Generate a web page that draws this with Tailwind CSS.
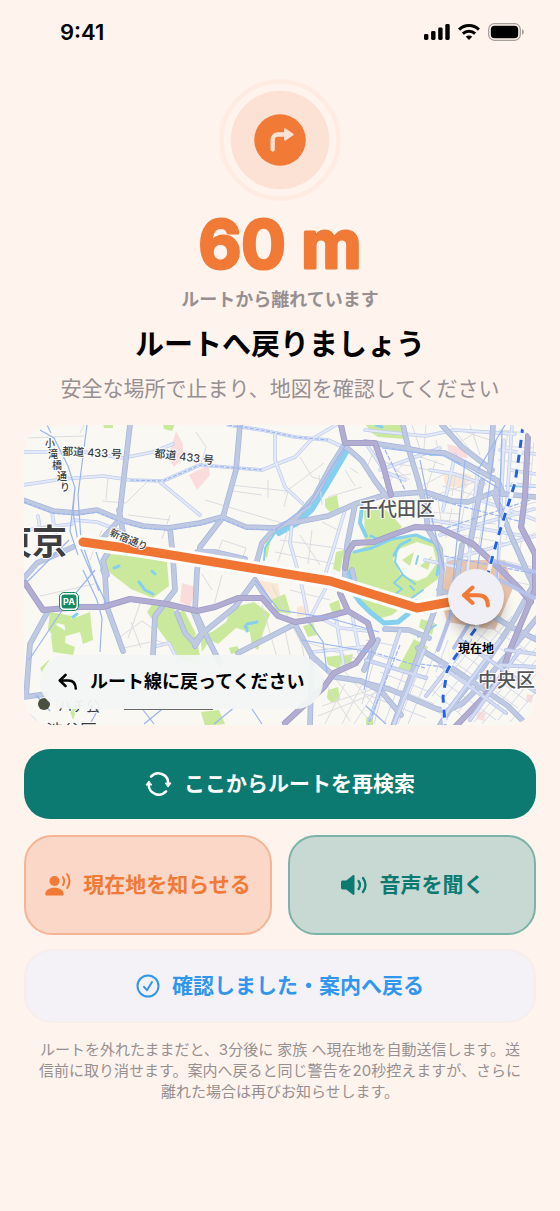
<!DOCTYPE html>
<html lang="ja">
<head>
  <meta charset="UTF-8" />
  <meta name="viewport" content="width=device-width, initial-scale=1.0" />
  <title>ルートへ戻りましょう</title>
  <script src="https://cdn.jsdelivr.net/npm/@tailwindcss/browser@4"></script>
</head>
<body class="min-h-screen bg-[#fff3ed] font-['Inter','Noto_Sans_CJK_JP',sans-serif] text-black">

  <!-- Status bar -->
  <header class="flex h-16 items-center justify-between pl-15 pr-9">
    <span class="text-[22px] font-semibold leading-none">9:41</span>
    <div class="flex items-center gap-2">
      <svg class="h-4 w-[26px]" viewBox="0 0 26 16" aria-hidden="true">
        <rect x="0" y="10" width="4.4" height="6" rx="1.4" />
        <rect x="7.1" y="7" width="4.4" height="9" rx="1.4" />
        <rect x="14.2" y="3.5" width="4.4" height="12.5" rx="1.4" />
        <rect x="21.3" y="0" width="4.4" height="16" rx="1.4" />
      </svg>
      <svg class="h-4 w-[22px]" viewBox="0 0 22 16" aria-hidden="true">
        <g fill="none" stroke="#000" stroke-width="3">
          <path d="M1.1 5.6a14.2 14.2 0 0 1 19.8 0" />
          <path d="M4.9 9.6a8.8 8.8 0 0 1 12.2 0" />
        </g>
        <path d="M11 16l-3.2-3.3a4.6 4.6 0 0 1 6.4 0z" />
      </svg>
      <svg class="h-[18px] w-9" viewBox="0 0 36 18" aria-hidden="true">
        <rect x="0.7" y="0.7" width="31.6" height="16.6" rx="5.6" fill="none" stroke="#a59f9c" stroke-width="1.3" />
        <rect x="2.8" y="2.8" width="27.4" height="12.4" rx="3.8" />
        <path d="M34 6v6c1.1-.5 1.8-1.6 1.8-3S35.100 6.500 34 6z" fill="#a59f9c" />
      </svg>
    </div>
  </header>

  <main class="flex flex-col px-6 pt-[15px]">

    <!-- Off-route alert -->
    <section class="flex flex-col items-center text-center">
      <svg class="size-[122px]" viewBox="0 0 122 122" aria-hidden="true">
        <circle cx="61" cy="61" r="58.500" fill="none" stroke="#feebe2" stroke-width="4.500" />
        <circle cx="61" cy="61" r="49.300" fill="#fce1d5" />
        <circle cx="61" cy="61" r="25.800" fill="#f07a36" />
        <path d="M53.700 70.500V60.500a5 5 0 0 1 5-5H66" fill="none" stroke="#fce1d5" stroke-width="4.300" stroke-linecap="round" />
        <path d="M66 50.200v10.600l7.800-5.300z" fill="#fce1d5" stroke="#fce1d5" stroke-width="1.800" stroke-linejoin="round" />
      </svg>
      <svg class="mt-2 h-[70px] w-[200px]" viewBox="0 0 200 70" role="img" aria-label="60 m">
        <text x="100" y="59" text-anchor="middle" font-family="Inter, sans-serif" font-size="66" font-weight="700" fill="#f07a36" stroke="#f07a36" stroke-width="3" stroke-linejoin="round">60 m</text>
      </svg>
      <p class="mt-2 text-lg font-semibold leading-[26px] text-[#969092]">ルートから離れています</p>
      <h1 class="mt-3 text-[29px] font-bold leading-10">ルートへ戻りましょう</h1>
      <p class="mt-2 text-[21px] leading-8 text-[#969092]">安全な場所で止まり、地図を確認してください</p>
    </section>

    <!-- Map -->
    <section class="relative mt-5 overflow-hidden rounded-[28px]" aria-label="地図">
      <svg class="block w-full" viewBox="24 425 512 300" fill="none" font-family="Inter, 'Noto Sans CJK JP', sans-serif">
        <defs>
          <!-- Arterial roads -->
          <g id="arterials">
            <path d="M130 425l-7 60-4 35-16 18M119 510l4 22" />
            <path d="M23 500l30 11 24 2 20-3 24 10 22 6 25 2 32-5 22-6 24 10 30 1 18-8 21-24 16-30 14-22" />
            <path d="M240 425l-4 45-13 47-23 30-3 24-2 40 9 20-9 15M204 631l16 32" />
            <path d="M345 446l17 15 13 20 12 16M275 528l-13 15-7 25" />
            <path d="M292 523l36-7 27-12 20-6 10-3 40-3 27 9 16 1 24-9 44 4" />
            <path d="M355 505l-8 40-3 40" />
            <path d="M365 442l40 6 20 4 20 1 20 10 33 18 4 10" />
            <path d="M403 425l5 22 10 33 7 27 3 22" />
            <path d="M442 425l20 22 30 23M493 425l-3 46M498 482l-3 14 17 42 18 40 7 14" />
            <path d="M103 570l2 5 2 32 16 44M170 528l3 30 2 32-20 26-2 38M107 575l-4-14 8-14M47 613l-17 31-4 53M24 697l22-3" />
            <path d="M24 578l13-15 36-16" />
            <path d="M255 580l-20 27-32 26M255 580l14 22M238 653l57-29 17 32 23 21 26 4 20 10 20 24M312 657l-2 68" />
            <path d="M197 552h18l30 7M177 613l8 20 9 10 8-10-8-20" />
            <path d="M385 629l24 1 20 8M352 570l4 18" />
            <path d="M428 529l12 20 2 22-3 27-18 50-19 53-10 28M439 590l44 20 30 18 24 12" />
            <path d="M365 683l24 6 48 20 10 2 16-8 22-22 22-26 30-37" />
            <path d="M536 580l-22 40-30 46-32 40-12 19M418 648l40 24 50 34 18 18" />
            <path d="M462 545l-6 40" />
            <path d="M378 640l-14 30M470 545l12-64" />
          </g>
          <!-- Expressways -->
          <g id="expressways">
            <path d="M25 583l18 27 37-3 23 0 27-8 37 5 30 7 18-4 23-9 24 0 16 18 17 6 27-4 26-7" />
            <path d="M341 425l4 18h30l8 22 8 30M340 593l8 18 20 12 5 17-17 23-22 10-10 14-39 36" />
            <path d="M345 568l3-16 6-9 20-1 18-7 23-8 24 1 34 16 26 24 20 20 12 14" />
            <path d="M528 436l-3 61-4 30 14 27v36l-26 62-8 26-20 22-26 27" />
          </g>
          <!-- Secondary streets -->
          <g id="streets">
            <path d="M24 452l60 0 39 6 30-6 20-8M23 485l40-6 40-3 27 4 33 1 37-16 62 5 33-13 17-18 24-14" />
            <path d="M228 425l34 5 33 7 33 3 15 7M275 433v27l10 27 17 16M160 482l40 33" />
            <path d="M345 510l-12 40-8 25M292 523l-2 20 8 28M73 520l24 2 26 10" />
            <path d="M24 530l48-6M38 516l4 26M52 512l4 26M330 580l-20 38M300 577l9 45" />
            <path d="M153 647l16-4 10 20M336 618l8 50M352 614l8 42M312 652l60-6M320 618l20 10 28 3" />
            <path d="M380 470l60-22M365 442l20 30 20 8M455 455l-12 55M478 468l-14 140M504 440l-8 170M512 425l-6 90" />
            <path d="M430 470l24 4 30 10M425 560l36 8M430 520l94 16M440 535l94-26M448 560l88-24M480 500l56 20" />
            <path d="M365 430l60 6 30-6 60 4M500 450l36 4M510 470l26 4M512 484l24 2" />
          </g>
        </defs>

        <rect x="24" y="425" width="512" height="300" fill="#f9f8f3" />

        <!-- Districts -->
        <g fill="#fbdcdc">
          <path d="M176 431l7 13v14l-9 9-6-10zM189 475l19-10 2 10-13 15z" />
          <path d="M447 444l18 5 3 9-18-1zM182 583l14 4-6 20-10-5zM478 711l8 2-2 8-8-2zM527 694l6 1-1 8-6-2z" />
        </g>
        <path d="M443 470l28 5-4 13-22-2zM258 580l20 4 3 16-12 2zM297 607l9-2 2 10-11 2z" fill="#fae8d4" />
        <path d="M447 560h58l8 28-18 42-48-8-6-24z" fill="#e9c5ad" />

        <!-- Parks -->
        <g fill="#cbe99c">
          <path d="M103 424h10v4h-9zM163 424h12l-3 7-8-2zM365 424h38l3 15-28-2-6-4z" />
          <path d="M108 554l20 1 39 7 2 24-16 12-22-9-22-17-8-10z" />
          <path d="M325 499l12-4 2 13-9 4-5-5zM336 552l8-2-4 22-7-3z" />
          <path d="M364 511l14-6 12 8 12 14-10 8-27 5zM348 554l20-9 26-6 24-4 16 6 5 14-1 24-22 16-24 20-14 4-18-20-9-8-4-26z" />
          <path d="M50 612l22 4-3 10-12-3-5 12-4-6zM56 625l10 6-1 12 10 4-2 8-20-3-2-16zM64 622l26-10 3 28-10 4-3-12-14 4z" />
          <path d="M147 612l8-12 18 6 4 12 20 20 4 26-20-4-22-30zM176 614l8-4 12 24-8 8z" />
          <path d="M212 632l14-10 6-14 22-6 16 12-6 16-6 20-6-4-2-14-14-4-18 16-8-4-8 12-2-18zM229 648l8-2 4 6-10 2z" />
          <path d="M271 600l14-6 6 20-14-2zM303 626l10-3 4 12-9 2zM329 604l10-4 2 10-9 2zM326 657l16-2-2 14-12-4zM343 656l10-2-2 8-7 3zM328 690l10-3 2 12-8 4-5-5z" />
          <path d="M414 639l14 8-12 27-19-4zM421 619l14 4-3 12-13-8zM40 668l10-9-8 14zM68 706l10-1-5 15zM201 712l18-2 6 14-20 2zM366 718l7-4v11h-7zM266 540l5-2-4 20-3-3z" />
        </g>
        <path d="M399 549l18-7 16 5 4 16-10 14-10 4-16-6-8-16z" fill="#f9f8f3" />
        <path d="M402 560l12-8-4 14zM420 566l12-10-4 14zM378 575l16 6-12 8z" fill="#cbe99c" />

        <!-- Water -->
        <g stroke="#84d0ee" stroke-linecap="round" stroke-linejoin="round">
          <path d="M346 452l-17 29-17 28-15 14-18 10" stroke-width="6" />
          <path d="M277 530l-12 18-1 12" stroke-width="2" />
          <path d="M362 507l-2 16 6 13" stroke-width="4" />
          <path d="M354 552l18-4 20-9 24-4 19 8 5 14-3 18M394 555l6-10 10-5" stroke-width="3" />
          <path d="M350 572v16l10 14 10 10 14 11 14-1 10-8 8-12" stroke-width="5" />
          <path d="M397 548l-2 14 8 13 12 9M418 556l-2 8M401 606l8-6 14-10M402 575l-8 8 8 6-8 6M410 586l4 4" stroke-width="2" />
          <path d="M114 568l5-2M139 582l6 8 8 4M152 571l3 3M245 627l2-3 10-2M247 631v-3M73 617l4-3M371 536l8 4M376 425l6 2" stroke-width="3" />
          <path d="M430 455l15-1 15 10M506 486l30 1M418 637l18-12" stroke-width="2" />
        </g>

        <!-- Lanes -->
        <g stroke="#dcdce0" stroke-width="1">
          <path d="M24 438l60-2M84 425l-4 8M108 476l-2 24M102 501l24 2 20-20M90 560l12-30M128 515l42 5M170 515l-8 24M196 432l10 15-6 20" />
          <path d="M230 485l58 6-4 16M232 491l30 4M268 480v18M284 493l40-30M300 457l12 20 14 4M322 505l-3-30M205 500l80 24M200 520l-5 4" />
          <path d="M222 540l24 8-6 18M222 541l-5 14M280 540l70 10M275 552l60 12M288 530l-10 32M312 530l-4 34M322 522l16 8M300 535l20 30M345 470l10 16M350 468l8 5M328 497l34-10" />
          <path d="M120 637l22-16 14 10M124 648l26-6M131 622l10 26M142 598l-14 40M40 596l54-12M155 640l18 6M212 590l-10-16M222 575l-8 30" />
          <path d="M262 605l20 70M272 585l30 60 8 46M290 590l40 10M300 640l60 20M285 630l6 30M320 675l30 46M330 672l40 50M345 672l30 34M322 706l60-20M318 716l60-24M345 684l-20 40M362 684l-20 40M376 690l-22 34" />
          <path d="M366 470l12-30M370 450l40 30M378 462l34 4M381 478l30-4M404 462l-22 30M414 455l30 10M418 468l22 4M422 486l26-14M436 460l-10 30M456 472l-4 24M466 474l-4 26M436 495l60-20M442 486l50 14M484 475l-18 24" />
          <path d="M366 512l60-14M430 500l2 24M438 500l4 28M430 512l30 2M452 508l-6 30M464 508l-6 34M474 506l-6 34M486 504l-8 46M440 520l56 4M446 532l64 12M500 512l36-10M498 546l40-14M512 510l-6 30M526 512l-8 50M500 560l36 8M506 580l30 6" />
          <path d="M412 425l8 24M426 425l-2 24M436 440l2 10M450 425l24 30M470 425l10 30M480 430l-20 12M499 430l36 4M500 446l34 2M498 460l34 4M508 430l-6 50M534 440l-4 50M460 430l30 10" />
        </g>

        <!-- City blocks south-east of the palace -->
        <g stroke="#d3d8ea" stroke-width="1">
          <path d="M366 640l30 6M366 652l26 8M366 694l60 24M380 672l50 20M374 660l-12 44M390 664l-16 60M404 672l-20 52M416 678l-18 46M428 676l-20 48M400 690l34 14M440 640l-14 36M448 640l-12 32" />
          <path d="M436 676l60 44M444 668l64 46M452 660l66 48M460 652l68 50M468 644l66 46M478 634l58 38M488 626l48 30M432 690l30 26M428 704l20 16" />
          <path d="M442 700l70-84M450 706l74-90M458 712l72-88M466 718l70-84M474 722l62-74M482 724l54-64M432 696l66-80M498 720l38-46M510 722l26-30" />
        </g>

        <!-- Road surfaces -->
        <g stroke-linejoin="round" stroke-linecap="round">
          <use href="#streets" stroke="#c0ccef" stroke-width="3.600" />
          <use href="#streets" stroke="#e4e9f7" stroke-width="2.200" />
          <use href="#arterials" stroke="#a5b4de" stroke-width="5.600" />
          <use href="#arterials" stroke="#bfc9e1" stroke-width="4.200" />
          <use href="#expressways" stroke="#9f9ac9" stroke-width="6" />
          <use href="#expressways" stroke="#b2aed2" stroke-width="4.400" />
          <g stroke="#b7c3ea" stroke-width="4">
            <path d="M400 630l-30 90M424 650l-30 74M366 660l60 18M470 640l-44 56M500 640l-56 76M520 650l-50 70M440 665l66 48M460 640l76 52M506 650l30 4M500 665l36 2" />
            <path d="M456 600l-18 50M500 580l34 18M490 560l46 12M470 622l-16 26" />
          </g>
          <g stroke="#d3dbf1" stroke-width="2.400">
            <path d="M400 630l-30 90M424 650l-30 74M366 660l60 18M470 640l-44 56M500 640l-56 76M520 650l-50 70M440 665l66 48M460 640l76 52M506 650l30 4M500 665l36 2" />
          </g>
        </g>

        <!-- Rail and subway -->
        <g stroke="#9bb5f1" stroke-width="1.200">
          <path d="M40 430l14 8 14 28 7 22-2 24 5 30 14 33M47 425l4 8M75 487l-5 44 8 24M87 425l-9 70 3 45 12 35 6 16" />
          <path d="M83 570l14 30 5 18-2 34M93 575l14 30M96 552l6 18M69 540l-20 20-22 22M95 570l-30 36-36 54" />
          <path d="M228 425l34 5 33 7 33 3M130 480l33 1 37-16 62 5" stroke-dasharray="4 1.500" />
          <path d="M24 502l29 11 24 2 20-3 24 10 22 6 25 2 32-5 22-6 24 10 30 1" stroke-dasharray="3 2" />
          <path d="M345 446l-36 58-34 26M255 580l24 30 50 8 50 14M302 640l68 12M309 622l14 20 4 30" />
          <path d="M382 448l62 8 22 12 32 20M420 460l10 50 14 60M465 460l-16 160M470 620l26-180M502 430l-6 180M478 470l36-60" />
          <path d="M385 450l20 40M426 497l100 26M440 530l90-30M444 556l92 18M365 650l60 18M400 645l-32 80M420 664l30 4" stroke-dasharray="5 1.500" />
          <path d="M24 710l16 14M36 695l14 16M100 706l-10 18M166 706l-22 18M140 706l14 18M250 706l12 18M236 706l-22 18M366 706l20 18M372 650l-8 40" />
        </g>
        <path d="M523 425l-3 24-5 34-17 54-11 40-10 50-22 30-8 14-4 26 2 28" stroke="#f3f6ff" stroke-width="4" />
        <path d="M523 425l-3 24-5 34-17 54-11 40-10 50-22 30-8 14-4 26 2 28" stroke="#2563dc" stroke-width="3" stroke-dasharray="8 7" />

        <!-- Suggested route -->
        <g stroke-linecap="round" stroke-linejoin="round">
          <path d="M83 542l70 10 177 29 87 27 60-11" stroke="#fffdfb" stroke-width="15" />
          <path d="M83 542l70 10 177 29 87 27 60-11" stroke="#f07432" stroke-width="9" />
        </g>

        <!-- Parking area sign -->
        <rect x="59.500" y="592.500" width="19" height="18" rx="4.500" fill="#fff" stroke="#178a63" />
        <rect x="61.500" y="594.500" width="15" height="14" rx="3" fill="#178a63" />
        <text x="69" y="605" text-anchor="middle" font-size="9" font-weight="700" fill="#fff">PA</text>

        <!-- Labels -->
        <g fill="#3d3d40" stroke="#fff" stroke-width="2" stroke-linejoin="round" paint-order="stroke">
          <text x="-3" y="555" font-size="35" font-weight="600">東京</text>
          <text x="359" y="516" font-size="19" font-weight="500" fill="#55565a">千代田区</text>
          <text x="478" y="687" font-size="19" font-weight="500" fill="#55565a">中央区</text>
          <g font-size="11" font-weight="500">
            <text x="62" y="455" transform="rotate(3 62 455)">都道 433 号</text>
            <text x="154" y="457" transform="rotate(7 154 457)">都道 433 号</text>
            <text x="109" y="535" transform="rotate(23 109 535)" font-size="10">新宿通り</text>
            <text x="45" y="447" font-size="10">小</text>
            <text x="48" y="458" font-size="10">滝</text>
            <text x="52" y="469" font-size="10">橋</text>
            <text x="57" y="480" font-size="10">通</text>
            <text x="60" y="491" font-size="10">り</text>
          </g>
          <text x="46" y="737" font-size="17">渋谷区</text>
          <text x="58" y="711" font-size="14">ハチ公</text>
        </g>
        <circle cx="44" cy="704" r="6" fill="#4a5140" />
        <path d="M124 709.500h89" stroke="#6b6b6b" />
      </svg>

      <!-- Guidance hint -->
      <div class="absolute bottom-4 left-4 flex h-[54px] items-center gap-3 rounded-full bg-[#f2f5f4]/95 px-[18px] text-lg font-semibold">
        <svg class="h-[18px] w-5" viewBox="0 0 20 18" fill="none" stroke="#000" stroke-width="2.600" stroke-linecap="round" stroke-linejoin="round" aria-hidden="true">
          <path d="M7.500 2L1.800 7.500l5.700 5.500M2.200 7.500H10.500c4.500 0 7 2.500 7.300 8" />
        </svg>
        ルート線に戻ってください
      </div>

      <!-- Current position -->
      <div class="absolute right-8 top-[144px] flex flex-col items-center">
        <div class="flex size-14 items-center justify-center rounded-full bg-[#f0eff5] shadow-lg shadow-black/30">
          <svg class="h-6 w-[30px]" viewBox="0 0 30 24" fill="none" stroke="#f07a36" stroke-width="4" stroke-linecap="round" stroke-linejoin="round" aria-hidden="true">
            <path d="M11.500 2.500L3 10.300l8.500 7.700M4 10.300h13c6.500 0 9.800 3.200 9.800 10.200" />
          </svg>
        </div>
        <span class="mt-4 text-xs font-semibold leading-4 [text-shadow:0_0_2px_white,0_0_2px_white]">現在地</span>
      </div>
    </section>

    <!-- Actions -->
    <div class="mt-6 grid grid-cols-2 gap-x-4 text-[21px] font-semibold">
      <button type="button" class="col-span-2 flex h-[70px] items-center justify-center gap-3 rounded-[26px] bg-[#0c7a71] text-white">
        <svg class="h-6 w-[27px]" viewBox="0 0 27 24" fill="none" stroke="currentColor" stroke-width="2.500" stroke-linecap="round" aria-hidden="true">
          <path d="M6 4.600A10 10 0 0 1 23.300 11M21 19.400A10 10 0 0 1 3.700 13" />
          <path d="M20.600 11h5.400l-2.700 3.800zM6.400 13H1l2.700-3.800z" fill="currentColor" stroke-width="1" stroke-linejoin="round" />
        </svg>
        ここからルートを再検索
      </button>
      <button type="button" class="mt-4 flex h-[100px] items-center justify-center gap-3 rounded-[28px] border-2 border-[#f5b495] bg-[#fad7c6] text-[#f07a36]">
        <svg class="h-6 w-[26px]" viewBox="0 0 26 24" fill="currentColor" aria-hidden="true">
          <circle cx="9.500" cy="8" r="5" />
          <path d="M.3 21c0-4 4-6.300 9.200-6.300s9.200 2.300 9.200 6.300c0 1-.6 1.500-1.600 1.500H1.900C.9 22.500.3 22 .3 21z" />
          <path d="M18 4.200c1.500 2.500 1.500 5.300 0 7.800M22.200 1.200c2.900 4.400 2.900 9.400 0 13.800" fill="none" stroke="currentColor" stroke-width="2" stroke-linecap="round" />
        </svg>
        現在地を知らせる
      </button>
      <button type="button" class="mt-4 flex h-[100px] items-center justify-center gap-3 rounded-[28px] border-2 border-[#7bb3a9] bg-[#c8d8d2] text-[#0c7a71]">
        <svg class="h-6 w-7" viewBox="0 0 28 24" fill="currentColor" aria-hidden="true">
          <path d="M1 9.300C1 8.300 1.700 7.600 2.700 7.600h3.600l6.300-5.200c.9-.7 1.900-.2 1.900.8v17.600c0 1-1 1.500-1.900.8l-6.300-5.200H2.700c-1 0-1.700-.7-1.700-1.700z" />
          <path d="M18.600 8c1.700 2.500 1.700 5.500 0 8M23 5c3.100 4.400 3.100 9.600 0 14" fill="none" stroke="currentColor" stroke-width="2.300" stroke-linecap="round" />
        </svg>
        音声を聞く
      </button>
      <button type="button" class="col-span-2 mt-[14px] flex h-[74px] items-center justify-center gap-3 rounded-[28px] border-2 border-[#f7edec] bg-[#f4f2f6] text-[#3096ee]">
        <svg class="size-6" viewBox="0 0 24 24" fill="none" stroke="currentColor" stroke-width="2" stroke-linecap="round" stroke-linejoin="round" aria-hidden="true">
          <circle cx="12" cy="12" r="10.500" />
          <path d="M8 12.800l3 3.400 5-8.200" />
        </svg>
        確認しました・案内へ戻る
      </button>
    </div>

    <p class="mt-4 text-center text-[15px] leading-[21px] text-[#969092]">
      ルートを外れたままだと、3分後に 家族 へ現在地を自動送信します。送<br />信前に取り消せます。案内へ戻ると同じ警告を20秒控えますが、さらに<br />離れた場合は再びお知らせします。
    </p>
  </main>
</body>
</html>
